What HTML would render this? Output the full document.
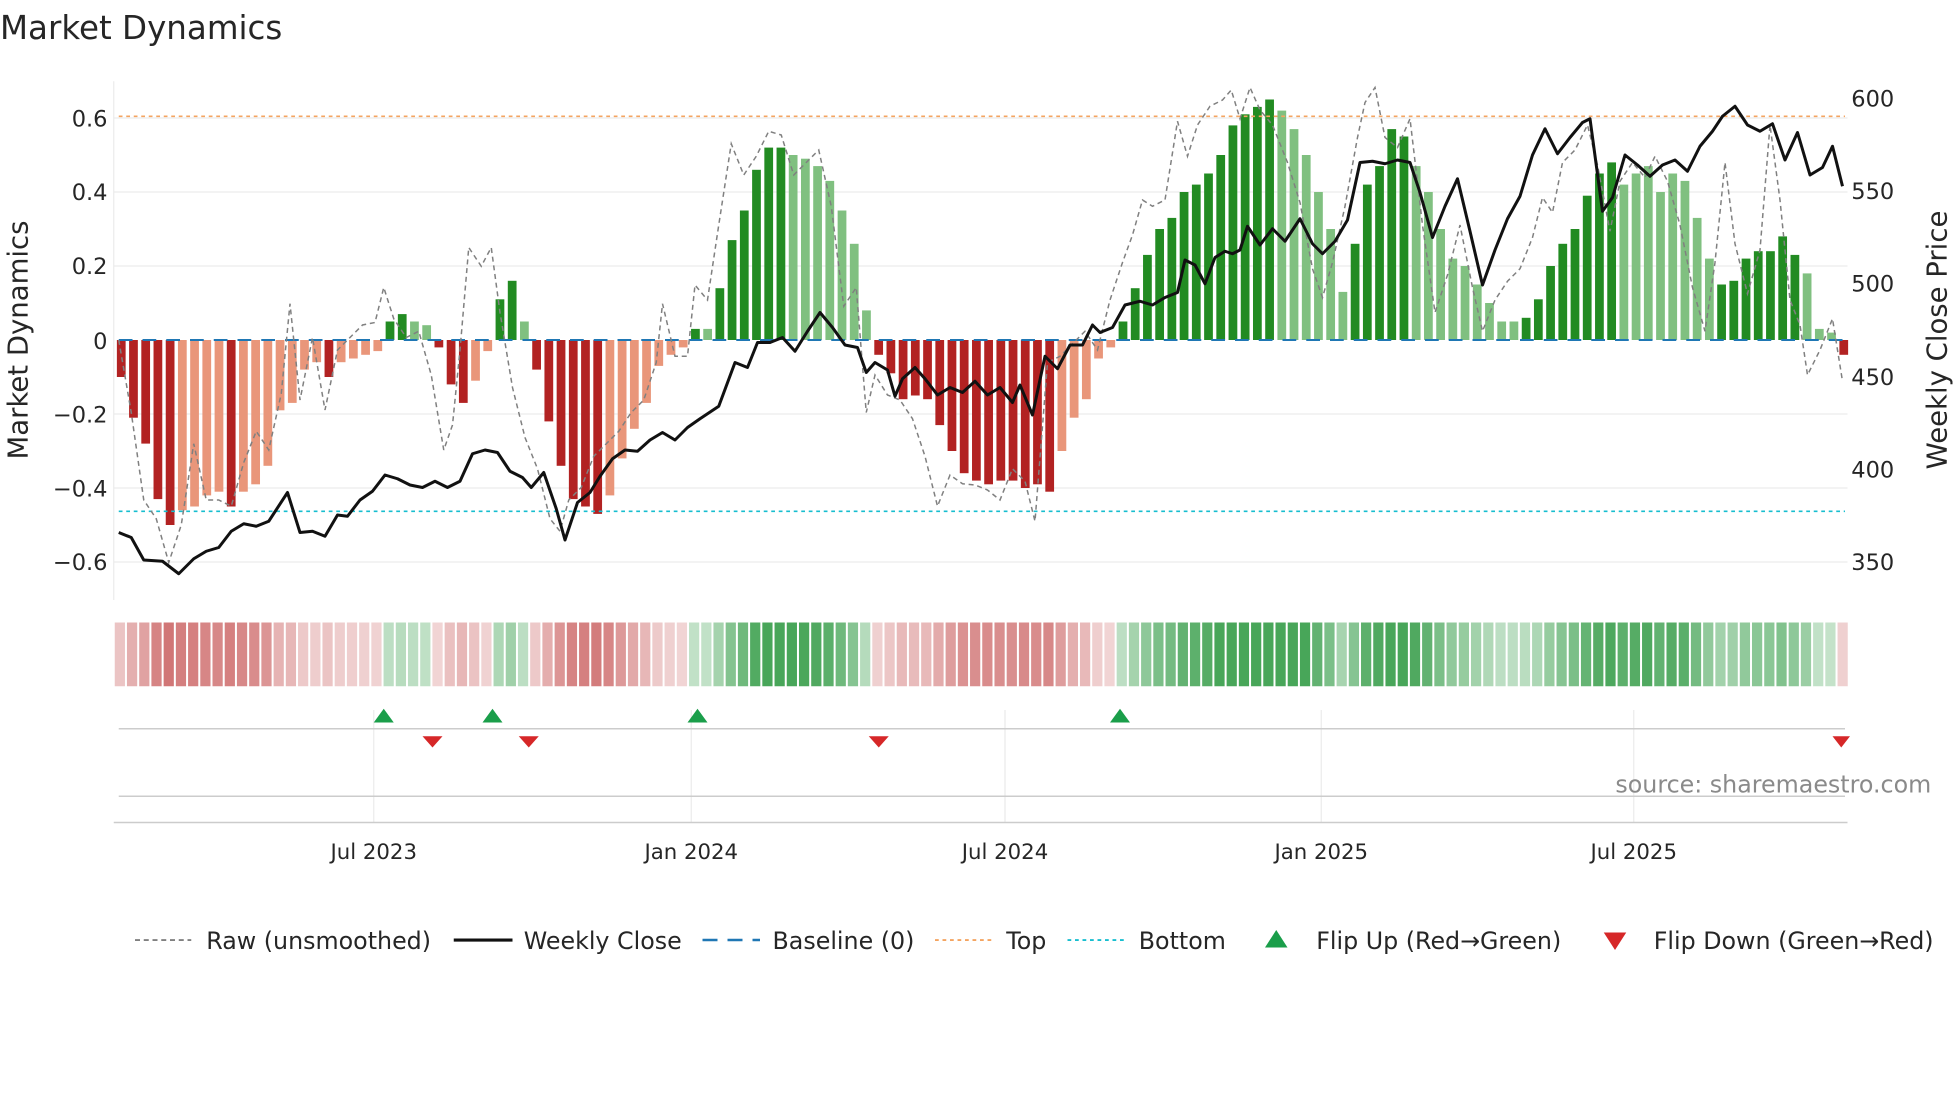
<!DOCTYPE html>
<html><head><meta charset="utf-8">
<style>
html,body{margin:0;padding:0;background:#fff;width:1960px;height:1102px;overflow:hidden}
svg{display:block}
text{font-family:"DejaVu Sans","Liberation Sans",sans-serif;fill:#262626}
</style></head><body>
<svg id="s" width="1960" height="1102" viewBox="0 0 1568 881.6" xmlns="http://www.w3.org/2000/svg">
<rect width="1568" height="882" fill="#fff"/>
<text x="0" y="31" font-size="26">Market Dynamics</text>
<g id="grid"></g>
<g id="heat"></g>
<g id="bars"></g>
<g id="lines"></g>
<line x1="91" y1="65" x2="91" y2="480" stroke="#ebebeb" stroke-width="1"/>
<text transform="translate(22,272) rotate(-90)" font-size="22" text-anchor="middle">Market Dynamics</text>
<text transform="translate(1557,272) rotate(-90)" font-size="22" text-anchor="middle">Weekly Close Price</text>
<g font-size="18" text-anchor="end">
<text x="86" y="101">0.6</text><text x="86" y="160">0.4</text><text x="86" y="219">0.2</text><text x="86" y="279">0</text>
<text x="86" y="338">−0.2</text><text x="86" y="397">−0.4</text><text x="86" y="456">−0.6</text>
</g>
<g font-size="18">
<text x="1481" y="85">600</text><text x="1481" y="159">550</text><text x="1481" y="233">500</text>
<text x="1481" y="308">450</text><text x="1481" y="382">400</text><text x="1481" y="456">350</text>
</g>
<g stroke="#ebebeb" stroke-width="1">
<line x1="299" y1="568" x2="299" y2="658"/><line x1="553" y1="568" x2="553" y2="658"/>
<line x1="804" y1="568" x2="804" y2="658"/><line x1="1057" y1="568" x2="1057" y2="658"/>
<line x1="1307" y1="568" x2="1307" y2="658"/>
</g>
<line x1="95" y1="583" x2="1476" y2="583" stroke="#ccc" stroke-width="1.2"/>
<line x1="95" y1="637" x2="1476" y2="637" stroke="#ccc" stroke-width="1.2"/>
<line x1="91" y1="658" x2="1478" y2="658" stroke="#ccc" stroke-width="1.2"/>
<g fill="#1a9e4a">
<polygon points="299,578 315,578 307,567"/><polygon points="386,578 402,578 394,567"/>
<polygon points="550,578 566,578 558,567"/><polygon points="888,578 904,578 896,567"/>
</g>
<g fill="#d62728">
<polygon points="338,589 354,589 346,598"/><polygon points="415,589 431,589 423,598"/>
<polygon points="695,589 711,589 703,598"/><polygon points="1466,589 1480,589 1473,598"/>
</g>
<text x="1545" y="634" font-size="19" text-anchor="end" style="fill:#8a8a8a">source: sharemaestro.com</text>
<g font-size="17" text-anchor="middle">
<text x="299" y="687">Jul 2023</text><text x="553" y="687">Jan 2024</text><text x="804" y="687">Jul 2024</text>
<text x="1057" y="687">Jan 2025</text><text x="1307" y="687">Jul 2025</text>
</g>
<g font-size="19">
<line x1="108" y1="752" x2="153" y2="752" stroke="#808080" stroke-width="1.5" stroke-dasharray="4,3"/>
<text x="165" y="759">Raw (unsmoothed)</text>
<line x1="363" y1="752" x2="410" y2="752" stroke="#111" stroke-width="2.5"/>
<text x="419" y="759">Weekly Close</text>
<line x1="562" y1="752" x2="608" y2="752" stroke="#1f77b4" stroke-width="2" stroke-dasharray="12,8"/>
<text x="618" y="759">Baseline (0)</text>
<line x1="748" y1="752" x2="794" y2="752" stroke="#f4a460" stroke-width="1.5" stroke-dasharray="3,3"/>
<text x="805" y="759">Top</text>
<line x1="854" y1="752" x2="900" y2="752" stroke="#17becf" stroke-width="1.5" stroke-dasharray="3,3"/>
<text x="911" y="759">Bottom</text>
<polygon points="1012,758 1030,758 1021,744" fill="#1a9e4a"/>
<text x="1053" y="759">Flip Up (Red→Green)</text>
<polygon points="1283,746 1301,746 1292,760" fill="#d62728"/>
<text x="1323" y="759">Flip Down (Green→Red)</text>
</g>
</svg>
<script>
var NS="http://www.w3.org/2000/svg";
function el(p,t,a){var e=document.createElementNS(NS,t);for(var k in a)e.setAttribute(k,a[k]);document.getElementById(p).appendChild(e);return e;}
function Y(v){return 272-v*296;}
[0.6,0.4,0.2,-0.2,-0.4,-0.6].forEach(function(v){el("grid","line",{x1:91,x2:1478,y1:Y(v),y2:Y(v),stroke:"#ececec","stroke-width":1});});
var B=[[-0.1,1],[-0.21,1],[-0.28,1],[-0.43,1],[-0.5,1],[-0.46,0],[-0.45,0],[-0.42,0],[-0.41,0],[-0.45,1],[-0.41,0],[-0.39,0],[-0.34,0],[-0.19,0],[-0.17,0],[-0.08,0],[-0.06,0],[-0.1,1],[-0.06,0],[-0.05,0],[-0.04,0],[-0.03,0],
[0.05,1],[0.07,1],[0.05,0],[0.04,0],[-0.02,1],[-0.12,1],[-0.17,1],[-0.11,0],[-0.03,0],[0.11,1],[0.16,1],[0.05,0],
[-0.08,1],[-0.22,1],[-0.34,1],[-0.43,1],[-0.45,1],[-0.47,1],[-0.42,0],[-0.32,0],[-0.24,0],[-0.17,0],[-0.07,0],[-0.04,0],[-0.02,0],
[0.03,1],[0.03,0],[0.14,1],[0.27,1],[0.35,1],[0.46,1],[0.52,1],[0.52,1],[0.5,0],[0.49,0],[0.47,0],[0.43,0],[0.35,0],[0.26,0],[0.08,0],
[-0.04,1],[-0.09,1],[-0.16,1],[-0.15,1],[-0.16,1],[-0.23,1],[-0.3,1],[-0.36,1],[-0.38,1],[-0.39,1],[-0.38,1],[-0.38,1],[-0.4,1],[-0.39,1],[-0.41,1],[-0.3,0],[-0.21,0],[-0.16,0],[-0.05,0],[-0.02,0],
[0.05,1],[0.14,1],[0.23,1],[0.3,1],[0.33,1],[0.4,1],[0.42,1],[0.45,1],[0.5,1],[0.58,1],[0.61,1],[0.63,1],[0.65,1],[0.62,0],[0.57,0],[0.5,0],[0.4,0],[0.3,0],[0.13,0],
[0.26,1],[0.42,1],[0.47,1],[0.57,1],[0.55,1],[0.47,0],[0.4,0],[0.3,0],[0.22,0],[0.2,0],[0.15,0],[0.1,0],[0.05,0],[0.05,0],
[0.06,1],[0.11,1],[0.2,1],[0.26,1],[0.3,1],[0.39,1],[0.45,1],[0.48,1],[0.42,0],[0.45,0],[0.47,0],[0.4,0],[0.45,0],[0.43,0],[0.33,0],[0.22,0],
[0.15,1],[0.16,1],[0.22,1],[0.24,1],[0.24,1],[0.28,1],[0.23,1],[0.18,0],[0.03,0],[0.02,0],[-0.04,1]];
var n=B.length,x0=97,x1=1475,sp=(x1-x0)/(n-1),hx0=91,hw=(1479-91)/n;
B.forEach(function(b,i){
 var x=x0+i*sp,v=b[0],c;
 if(v>=0)c=b[1]?"#228b22":"#80c080";else c=b[1]?"#b22222":"#e9967a";
 var y=Y(Math.max(v,0)),h=Math.abs(v)*296;
 el("bars","rect",{x:x-3.5,y:y,width:7,height:Math.max(h,0.5),fill:c});
 var m=Math.min(Math.abs(v)/0.5,1),a;
 if(v>=0){a=0.25+0.6*m;c="rgba(40,150,60,"+a+")";}else{a=0.2+0.5*m;c="rgba(190,60,60,"+a+")";}
 el("heat","rect",{x:hx0+i*hw+0.8,y:498,width:hw-1.6,height:51,fill:c});
});
el("lines","line",{x1:95,x2:1476,y1:272,y2:272,stroke:"#1f77b4","stroke-width":1.6,"stroke-dasharray":"11,8"});
el("lines","line",{x1:95,x2:1476,y1:93,y2:93,stroke:"#f4a460","stroke-width":1.3,"stroke-dasharray":"3,3"});
el("lines","line",{x1:95,x2:1476,y1:409,y2:409,stroke:"#17becf","stroke-width":1.3,"stroke-dasharray":"3,3"});
var R="95,272 105,330 115,400 125,415 135,450 145,420 155,355 165,400 175,400 185,405 195,370 205,345 215,360 225,315 232,243 240,320 250,270 260,328 270,280 280,270 290,260 300,258 307,230 315,255 325,270 335,265 345,300 355,360 362,340 368,280 375,198 385,213 393,198 400,250 410,310 420,350 430,375 440,415 448,425 455,400 465,390 475,365 485,355 495,345 505,330 515,320 525,290 530,243 540,285 550,285 556,228 566,240 575,180 585,115 595,140 605,125 615,105 625,108 635,140 645,130 655,120 665,165 675,245 685,230 693,330 700,300 710,316 720,320 730,335 740,365 750,405 760,380 770,387 780,388 790,392 800,400 810,375 820,385 828,417 838,290 848,285 858,275 868,265 878,280 888,240 898,210 906,188 914,160 922,165 932,160 942,97 950,125 958,100 968,85 978,80 985,72 992,95 1000,70 1008,88 1018,100 1030,130 1040,162 1050,215 1058,238 1066,210 1076,165 1086,110 1092,82 1100,70 1108,110 1118,118 1128,95 1138,180 1148,250 1158,220 1168,180 1178,230 1186,265 1196,240 1206,225 1216,215 1226,190 1234,158 1242,170 1250,130 1260,120 1270,100 1278,132 1288,185 1296,145 1306,130 1316,142 1324,125 1334,145 1344,180 1354,230 1364,265 1372,210 1380,130 1388,195 1398,235 1408,200 1416,100 1424,160 1432,240 1440,260 1446,300 1456,280 1466,255 1474,305";
el("lines","polyline",{points:R,fill:"none",stroke:"#808080","stroke-width":1.2,"stroke-dasharray":"4,3"});
var C="95,426 105,430 115,448 130,449 143,459 155,447 165,441 175,438 185,425 195,419 205,421 215,417 230,394 240,426 250,425 260,429 270,412 278,413 288,400 298,393 308,380 318,383 328,388 338,390 348,385 358,390 368,385 378,363 388,360 398,362 408,377 418,382 425,390 435,378 445,407 452,432 462,402 472,394 480,381 490,367 500,360 510,361 520,352 530,346 540,352 550,342 560,335 575,325 588,290 598,294 606,274 616,274 626,270 636,281 646,265 656,250 666,262 676,276 686,278 693,298 700,290 710,296 716,317 722,303 732,294 740,303 750,316 760,310 770,314 780,305 790,316 800,310 810,322 816,308 826,332 836,285 846,295 856,276 866,276 874,260 880,266 890,262 900,244 912,241 922,244 932,238 942,234 948,208 956,212 964,227 972,206 980,201 986,203 992,200 998,181 1008,196 1018,183 1028,193 1040,175 1050,195 1058,203 1068,193 1078,176 1088,130 1098,129 1108,131 1118,128 1128,130 1136,154 1146,190 1156,165 1166,143 1176,185 1186,228 1196,200 1206,175 1216,157 1226,124 1236,103 1246,123 1256,110 1266,98 1272,95 1282,169 1290,158 1300,124 1310,132 1320,141 1330,132 1340,128 1350,137 1360,117 1370,105 1378,93 1388,85 1398,100 1408,105 1418,99 1428,128 1438,106 1448,140 1458,134 1466,117 1474,149";
el("lines","polyline",{points:C,fill:"none",stroke:"#111","stroke-width":2.4,"stroke-linejoin":"round"});
</script>
</body></html>
